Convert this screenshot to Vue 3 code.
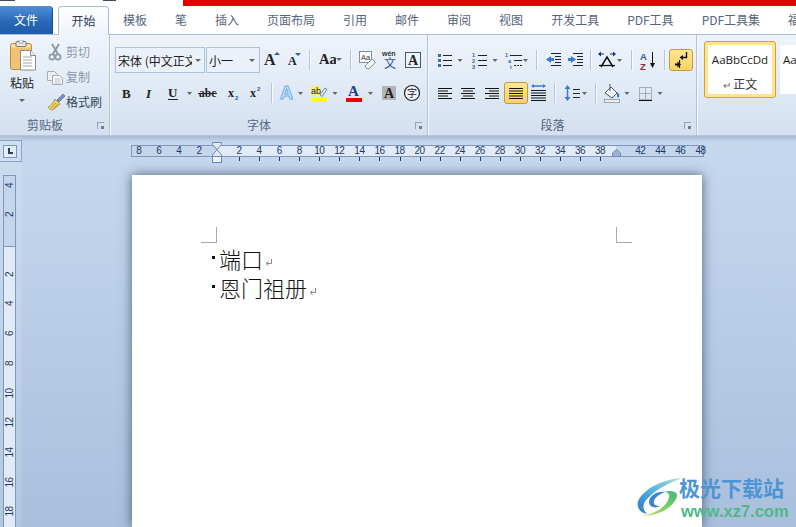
<template>
  <div class="app">
    <!-- title strip -->
    <div class="strip">
      <i class="nub nub-a"></i>
      <i class="nub nub-b"></i>
      <div class="redbar"></div>
    </div>

    <!-- tabs -->
    <div class="tabs">
      <div class="tab-file">文件</div>
      <div class="tab-home">开始</div>
      <div v-for="t in tabs" :key="t" class="tab">{{ t }}</div>
    </div>

    <!-- ribbon -->
    <div class="ribbon">
      <section class="group g-clip">
        <div class="clip-body">
          <div class="paste">
            <svg width="26" height="31" viewBox="0 0 26 31">
              <rect x="0.5" y="3.5" width="21" height="26" rx="2" fill="#f2c273" stroke="#b98a45" />
              <rect x="1.5" y="4.5" width="19" height="3" fill="#fbe0a8" />
              <rect x="6" y="1.5" width="10" height="5" rx="1" fill="#e9e9e9" stroke="#777" />
              <rect x="9" y="0" width="4" height="3" fill="#fff" stroke="#777" stroke-width=".6" />
              <path d="M10.5 10.5h10l5 5v14.5h-15z" fill="#fff" stroke="#8b8b8b" />
              <path d="M20.5 10.5v5h5" fill="#eee" stroke="#8b8b8b" />
              <path d="M13 17h9M13 20h9M13 23h9M13 26h9" stroke="#a9a9a9" />
            </svg>
            <span class="paste-label">粘贴</span>
            <i class="tri"></i>
          </div>
          <div class="clip-list">
            <div class="clip-row off">
              <svg width="20" height="20" viewBox="0 0 20 20">
                <path d="M6 2l6 10M13 2L7 12" stroke="#8e99a8" stroke-width="2" fill="none" />
                <circle cx="6" cy="15" r="2.6" fill="none" stroke="#8e99a8" stroke-width="1.6" />
                <circle cx="12" cy="15" r="2.6" fill="none" stroke="#8e99a8" stroke-width="1.6" />
              </svg>
              <span>剪切</span>
            </div>
            <div class="clip-row off">
              <svg width="20" height="20" viewBox="0 0 20 20">
                <path d="M1.5 4.5h7l3 3v6h-10z" fill="#eef0f3" stroke="#a4acb8" />
                <path d="M6.5 8.5h7l3 3v6h-10z" fill="#f7f8fa" stroke="#a4acb8" />
                <path d="M8.5 12h6M8.5 14h6M8.5 16h6" stroke="#b8bec8" />
              </svg>
              <span>复制</span>
            </div>
            <div class="clip-row">
              <svg width="20" height="20" viewBox="0 0 20 20">
                <path d="M11 8l6-6 2 2-6 6z" fill="#7c93bb" stroke="#4b628c" stroke-width=".7" />
                <path d="M2 15c3-1 5-4 7-8l5 5c-3 3-6 5-8 6-2-.5-3-1.500-4-3z" fill="#f0d05c" stroke="#9a7c2a" stroke-width=".7" />
                <path d="M5 16l5-5M8 16l4-4" stroke="#a38428" stroke-width=".7" />
              </svg>
              <span>格式刷</span>
            </div>
          </div>
        </div>
        <div class="glabel">剪贴板<i class="launcher"></i></div>
      </section>

      <section class="group g-font">
        <div class="rows">
          <div class="row1">
            <div class="combo combo-font">
              <span class="combo-text">宋体 (中文正文)</span>
              <i class="tri"></i>
            </div>
            <div class="combo combo-size">
              <span class="combo-text">小一</span>
              <i class="tri"></i>
            </div>
            <svg width="23" height="24" viewBox="0 0 23 24">
              <text x="4" y="17" class="ser" font-size="16">A</text>
              <path d="M14 7h6l-3-3z" fill="#2d5ea8" />
            </svg>
            <svg width="21" height="24" viewBox="0 0 21 24">
              <text x="5" y="17" class="ser" font-size="12">A</text>
              <path d="M12 5h6l-3 3z" fill="#2d5ea8" />
            </svg>
            <i class="sep"></i>
            <svg width="21" height="24" viewBox="0 0 21 24">
              <text x="4" y="16" class="ser" font-size="14.500">Aa</text>
            </svg>
            <svg width="9" height="24" viewBox="0 0 9 24"><path d="M0 10h6l-3 3z" fill="#666" /></svg>
            <i class="sep"></i>
            <svg width="22" height="24" viewBox="0 0 22 24">
              <rect x="3.500" y="3.500" width="12" height="11" fill="#fff" stroke="#7d8ea8" />
              <text x="5" y="11.500" class="san" font-size="7.500" fill="#333">Aa</text>
              <path d="M9 18l7-7 3.500 3-6 6.500h-3z" fill="#f6f8fb" stroke="#7d8ea8" />
            </svg>
            <svg width="23" height="24" viewBox="0 0 23 24">
              <text x="4" y="7.500" class="san wen" font-size="7" fill="#333">wén</text>
              <text x="6" y="20" class="cjk" font-size="12" fill="#2a52b8">文</text>
            </svg>
            <svg width="23" height="24" viewBox="0 0 23 24">
              <rect x="4.500" y="4.500" width="15" height="15" fill="#eef3fa" stroke="#3d5a7e" />
              <text x="7" y="17" class="ser" font-size="14">A</text>
            </svg>
          </div>
          <div class="row2">
            <svg width="23" height="24" viewBox="0 0 23 24"><text x="7" y="17" class="ser" font-size="13">B</text></svg>
            <svg width="23" height="24" viewBox="0 0 23 24"><text x="8" y="17" class="ser ita" font-size="13">I</text></svg>
            <svg width="23" height="24" viewBox="0 0 23 24">
              <text x="7" y="16" class="ser" font-size="13">U</text>
              <path d="M7 18.500h10" stroke="#222" />
            </svg>
            <svg width="11" height="24" viewBox="0 0 11 24"><path d="M3 11h5l-2.500 3z" fill="#666" /></svg>
            <svg width="26" height="24" viewBox="0 0 26 24">
              <text x="4" y="16" class="ser" font-size="11.500">abc</text>
              <path d="M3 12.500h19" stroke="#222" />
            </svg>
            <svg width="23" height="24" viewBox="0 0 23 24">
              <text x="7" y="16" class="ser" font-size="12">x</text>
              <text x="14" y="19" class="san bluef" font-size="6">2</text>
            </svg>
            <svg width="22" height="24" viewBox="0 0 22 24">
              <text x="6" y="16" class="ser" font-size="12">x</text>
              <text x="13" y="10" class="san bluef" font-size="6">2</text>
            </svg>
            <i class="sep"></i>
            <svg width="19" height="24" viewBox="0 0 19 24">
              <text x="3" y="18" class="glow" font-size="18">A</text>
            </svg>
            <svg width="9" height="24" viewBox="0 0 9 24"><path d="M2 11h5l-2.500 3z" fill="#666" /></svg>
            <svg width="25" height="24" viewBox="0 0 25 24">
              <rect x="6" y="5" width="9" height="9" fill="#f6ee7a" />
              <text x="6" y="13" class="san" font-size="9" fill="#222">ab</text>
              <path d="M15 14l5-7 2 1.500-5 7z" fill="#e8eef7" stroke="#4c6b96" stroke-width=".8" />
              <rect x="6" y="17" width="16" height="4" fill="#ffff00" />
            </svg>
            <svg width="10" height="24" viewBox="0 0 10 24"><path d="M2.500 11h5l-2.500 3z" fill="#666" /></svg>
            <svg width="25" height="24" viewBox="0 0 25 24">
              <text x="8" y="15" class="ser navy" font-size="15">A</text>
              <rect x="6" y="17" width="16" height="4" fill="#ee0000" />
            </svg>
            <svg width="11" height="24" viewBox="0 0 11 24"><path d="M3 11h5l-2.500 3z" fill="#666" /></svg>
            <svg width="25" height="24" viewBox="0 0 25 24">
              <rect x="6" y="5" width="14" height="14" fill="#b4b4b4" />
              <text x="8" y="17" class="ser" font-size="14">A</text>
            </svg>
            <svg width="23" height="24" viewBox="0 0 23 24">
              <circle cx="11" cy="12" r="7.500" fill="#eef3fa" stroke="#222" stroke-width="1.200" />
              <text x="6" y="16" class="cjk" font-size="10" fill="#222">字</text>
            </svg>
          </div>
        </div>
        <div class="glabel">字体<i class="launcher"></i></div>
      </section>

      <section class="group g-para">
        <div class="rows">
          <div class="row1">
            <svg width="20" height="24" viewBox="0 0 20 24">
              <path d="M3 6h3v3H3zM3 11h3v3H3zM3 16h3v3H3z" fill="#3c6cb4" />
              <path d="M8 7.500h9M8 12.500h9M8 17.500h9" stroke="#222" />
            </svg>
            <svg width="10" height="24" viewBox="0 0 10 24"><path d="M2.500 11h5l-2.500 3z" fill="#666" /></svg>
            <svg width="25" height="24" viewBox="0 0 25 24">
              <text x="7" y="9" class="san bluef" font-size="5.500">1</text>
              <text x="7" y="15" class="san bluef" font-size="5.500">2</text>
              <text x="7" y="21" class="san bluef" font-size="5.500">3</text>
              <path d="M13 7.500h9M13 12.500h9M13 17.500h9" stroke="#222" />
            </svg>
            <svg width="10" height="24" viewBox="0 0 10 24"><path d="M2.500 11h5l-2.500 3z" fill="#666" /></svg>
            <svg width="22" height="24" viewBox="0 0 22 24">
              <text x="5" y="9" class="san bluef" font-size="5.500">1</text>
              <text x="8" y="15" class="san bluef" font-size="5.500">a</text>
              <text x="10" y="21" class="san bluef" font-size="5.500">i</text>
              <path d="M10 7.500h12M14 12.500h8" stroke="#222" />
              <path d="M14 17.500h8" stroke="#222" stroke-dasharray="2 1" />
            </svg>
            <svg width="9" height="24" viewBox="0 0 9 24"><path d="M1 11h5l-2.500 3z" fill="#666" /></svg>
            <i class="sep"></i>
            <svg width="22" height="24" viewBox="0 0 22 24">
              <path d="M9 5.500h10M13 8.500h6M13 11.500h6M13 14.500h6M9 17.500h10" stroke="#222" />
              <path d="M4 11.500l5-3.500v2h3v3H9v2z" fill="#3c7cc8" />
            </svg>
            <svg width="21" height="24" viewBox="0 0 21 24">
              <path d="M9 5.500h10M13 8.500h6M13 11.500h6M13 14.500h6M9 17.500h10" stroke="#222" />
              <path d="M12 11.500L7 8v2H4v3h3v2z" fill="#3c7cc8" />
            </svg>
            <i class="sep"></i>
            <svg width="21" height="24" viewBox="0 0 21 24">
              <path d="M5 19l6-10 6 10" fill="none" stroke="#111" stroke-width="1.500" />
              <path d="M3 17.500h16" stroke="#111" stroke-width="1.200" />
              <path d="M2 6l3-2.500v2h3v1H5v2zM20 6l-3-2.500v2h-3v1h3v2z" fill="#122e7d" />
            </svg>
            <svg width="9" height="24" viewBox="0 0 9 24"><path d="M0 11h5l-2.500 3z" fill="#666" /></svg>
            <i class="sep"></i>
            <svg width="22" height="24" viewBox="0 0 22 24">
              <text x="3" y="12" class="san az-a" font-size="9.500">A</text>
              <text x="3" y="21.500" class="san az-z" font-size="9.500">Z</text>
              <path d="M15.500 4v14" stroke="#111" />
              <path d="M13 15h5l-2.500 5z" fill="#111" />
            </svg>
            <i class="sep"></i>
            <div class="on-btn pil">
              <svg width="22" height="22" viewBox="0 0 22 22">
                <path d="M16.500 3v5.500H12" fill="none" stroke="#111" stroke-width="1.400" />
                <path d="M13 6v5L9.500 8.500z" fill="#111" />
                <path d="M9.500 11v8" stroke="#111" stroke-width="1.200" />
                <path d="M5 14.500h2.500v-2l3.500 3-3.500 3v-2H5z" fill="#111" />
              </svg>
            </div>
          </div>
          <div class="row2">
            <svg width="23" height="24" viewBox="0 0 23 24"><path d="M3 7.500h14M3 10h10M3 12.500h14M3 15h10M3 17.500h14" stroke="#111" /></svg>
            <svg width="23" height="24" viewBox="0 0 23 24"><path d="M3 7.500h14M5 10h10M3 12.500h14M5 15h10M3 17.500h14" stroke="#111" /></svg>
            <svg width="23" height="24" viewBox="0 0 23 24"><path d="M4 7.500h14M8 10h10M4 12.500h14M8 15h10M4 17.500h14" stroke="#111" /></svg>
            <div class="on-btn">
              <svg width="22" height="22" viewBox="0 0 22 22"><path d="M4 6.500h14M4 9h14M4 11.500h14M4 14h14M4 16.500h14" stroke="#111" /></svg>
            </div>
            <svg width="21" height="24" viewBox="0 0 21 24">
              <path d="M4 5h13" stroke="#3c7cc8" stroke-width="1.500" />
              <path d="M3 5l3-2v4zM18 5l-3-2v4z" fill="#3c7cc8" />
              <path d="M3 9.500h15M3 12h15M3 14.500h15M3 17h15M3 19.500h15" stroke="#111" />
            </svg>
            <i class="sep"></i>
            <svg width="30" height="24" viewBox="0 0 30 24">
              <path d="M7.500 7v10" stroke="#3c7cc8" stroke-width="1.500" />
              <path d="M4.500 8l3-4 3 4zM4.500 16l3 4 3-4z" fill="#3c7cc8" />
              <path d="M13 8.500h7M13 12.500h7M13 16.500h7" stroke="#222" />
              <path d="M22 11h5l-2.500 3z" fill="#666" />
            </svg>
            <i class="sep"></i>
            <svg width="21" height="24" viewBox="0 0 21 24">
              <path d="M4 12l6-6 6 6-5 5z" fill="#f4f6f9" stroke="#555" />
              <path d="M9 3v7" stroke="#555" />
              <path d="M16 11c2 2 3 3 2 5-1 1-2 0-2-1z" fill="#3c7cc8" />
              <rect x="3.500" y="18.500" width="15" height="3" fill="#efefef" stroke="#9aa4b2" />
            </svg>
            <svg width="10" height="24" viewBox="0 0 10 24"><path d="M2.500 11h5l-2.500 3z" fill="#666" /></svg>
            <svg width="23" height="24" viewBox="0 0 23 24">
              <rect x="7.500" y="6.500" width="12" height="12" fill="none" stroke="#777" stroke-dasharray="1 1" />
              <path d="M13.500 6.500v12M7.500 12.500h12" stroke="#777" stroke-dasharray="1 1" />
              <path d="M7 19.500h13" stroke="#111" />
            </svg>
            <svg width="10" height="24" viewBox="0 0 10 24"><path d="M2.500 11h5l-2.500 3z" fill="#666" /></svg>
          </div>
        </div>
        <div class="glabel">段落<i class="launcher"></i></div>
      </section>

      <section class="group g-style">
        <div class="style-card active">
          <span class="style-sample">AaBbCcDd</span>
          <span class="style-name"><em>↵</em> 正文</span>
        </div>
        <div class="style-card">
          <span class="style-sample">AaBbCcDd</span>
        </div>
      </section>
    </div>

    <!-- document area -->
    <div class="work">
      <div class="side">
        <div class="corner"><span class="corner-btn"><i class="corner-l"></i></span></div>
        <div class="vruler">
          <div class="vruler-dark"></div>
          <span v-for="n in vMarks" :key="n.k" class="vnum" :style="{ top: n.y + 'px' }">{{ n.t }}</span>
        </div>
      </div>
      <div class="main">
        <div class="hruler">
          <div class="hruler-light"></div>
          <template v-for="n in hMarks" :key="n.k">
            <span class="hnum" :style="{ left: n.x + 'px' }">{{ n.t }}</span>
            <i v-if="n.tick" class="htick" :style="{ left: n.x + 'px' }"></i>
          </template>
          <svg class="marker-l" width="10" height="21" viewBox="0 0 10 21">
            <path d="M.5.500h9v2L5 7.500 9.500 13v1.500h-9V13L5 7.500.5 2.500z" fill="#dfe9f6" stroke="#6f88ad" />
            <rect x=".5" y="14.500" width="9" height="6" fill="#eef3fa" stroke="#6f88ad" />
          </svg>
          <svg class="marker-r" width="9" height="8" viewBox="0 0 9 8">
            <path d="M.5 7.500V4L4.500.5 8.500 4v3.500z" fill="#9db2d2" stroke="#6f88ad" />
          </svg>
        </div>
        <div class="page">
          <i class="crop crop-l"></i>
          <i class="crop crop-r"></i>
          <div class="line">
            <i class="dot"></i><span>端口</span>
            <svg class="ret" width="8" height="8" viewBox="0 0 8 8"><path d="M6.500 0v4.500H2M3.500 2.500L1 4.500l2.500 2" fill="none" stroke="#888" /></svg>
          </div>
          <div class="line">
            <i class="dot"></i><span>恩门祖册</span>
            <svg class="ret" width="8" height="8" viewBox="0 0 8 8"><path d="M6.500 0v4.500H2M3.500 2.500L1 4.500l2.500 2" fill="none" stroke="#888" /></svg>
          </div>
        </div>
      </div>
    </div>

    <!-- site watermark -->
    <div class="wm">
      <svg width="45" height="40" viewBox="0 0 45 40">
        <defs>
          <linearGradient id="wmBlue" x1="1" y1="0" x2="0" y2="1">
            <stop offset="0" stop-color="#b8e0c8" />
            <stop offset=".5" stop-color="#54b4e4" />
            <stop offset="1" stop-color="#2f74c4" />
          </linearGradient>
          <linearGradient id="wmGreen" x1="1" y1="0" x2="0" y2="1">
            <stop offset="0" stop-color="#42b878" />
            <stop offset=".7" stop-color="#9ad860" />
            <stop offset="1" stop-color="#e6e860" />
          </linearGradient>
        </defs>
        <path d="M45 1C28 2 8 10 1 24c-2 7 3 12 9 13-5-5-5-11 2-17C20 12 32 6 45 1z" fill="url(#wmBlue)" />
        <path d="M40 17c1 9-14 22-36 22 14-2 26-9 28-19 1-3-2-5-5-5 6-2 11-1 13 2z" fill="url(#wmGreen)" />
        <path d="M28 15c-8-1-16 4-16 10 0 5 6 7 11 4-5 0-7-2-6-5 1-4 6-7 11-9z" fill="#3a86cc" />
      </svg>
      <div class="wm-text">
        <span class="wm-cn">极光下载站</span>
        <span class="wm-en">www.xz7.com</span>
      </div>
    </div>
  </div>
</template>

<script setup>
const tabs = ['模板', '笔', '插入', '页面布局', '引用', '邮件', '审阅', '视图', '开发工具', 'PDF工具', 'PDF工具集', '福']

// 水平标尺：0 点在 218px，每 2 个单位约 20px
const hMarks = []
for (let v = -8; v <= 48; v += 2) {
  if (v === 0 || v === 40) continue
  hMarks.push({
    k: v,
    t: Math.abs(v),
    x: 87 + v * 10.03,
    tick: v > 0 && v < 40,
  })
}

// 垂直标尺
const vMarks = []
for (let v = -4; v <= 18; v += 2) {
  if (v === 0) continue
  vMarks.push({ k: v, t: Math.abs(v), y: 69 + v * 14.85 })
}
</script>

<style scoped>
.app {
  position: relative;
  display: flex;
  flex-direction: column;
  width: 796px;
  height: 527px;
  overflow: hidden;
  background: #fff;
  font-family: "Noto Sans CJK SC", sans-serif;
  font-size: 12px;
}

/* ---- strip ---- */
.strip {
  position: relative;
  display: flex;
  justify-content: flex-end;
  flex: none;
  height: 6px;
}
.redbar {
  width: 613px;
  background: #e00000;
}
.nub {
  position: absolute;
  top: 0;
  height: 1px;
  background: #3b4a6b;
}
.nub-a { left: 0; width: 15px; }
.nub-b { left: 103px; width: 13px; }

/* ---- tabs ---- */
.tabs {
  display: flex;
  align-items: flex-end;
  flex: none;
  height: 29px;
  border-bottom: 1px solid #a9bdd6;
  box-sizing: border-box;
  white-space: nowrap;
}
.tabs > div { flex: none; }
.tab-file {
  width: 53px;
  height: 28px;
  line-height: 27px;
  text-align: center;
  color: #fff;
  background: linear-gradient(#4f8fd6, #2a68b8 55%, #1f5aa8);
  border-radius: 0 4px 0 0;
  border-right: 1px solid #1b4f96;
  box-sizing: border-box;
}
.tab-home {
  width: 51px;
  height: 29px;
  margin: 0 0 -1px 5px;
  line-height: 27px;
  text-align: center;
  color: #2c3c54;
  background: linear-gradient(#fff, #eef3fa);
  border: 1px solid #a9bdd6;
  border-bottom: 0;
  border-radius: 4px 4px 0 0;
  box-sizing: border-box;
}
.tab {
  height: 28px;
  line-height: 27px;
  padding: 0 14px;
  color: #54657d;
}

/* ---- ribbon ---- */
.ribbon {
  display: flex;
  flex: none;
  height: 101px;
  background: linear-gradient(#eff4fb, #d3e0f0);
  box-sizing: border-box;
  border-bottom: 1px solid #b5c6da;
  color: #222;
}
.group {
  display: flex;
  flex-direction: column;
  flex: none;
  box-sizing: border-box;
  height: 100px;
  border-right: 1px solid #b3c4d9;
  box-shadow: 1px 0 0 #f4f8fc;
}
.g-clip { width: 110px; }
.g-font { width: 318px; padding-left: 5px; }
.g-para { width: 269px; padding-left: 7px; }
.g-style { flex: 1; flex-direction: row; gap: 4px; padding: 6px 0 0 7px; border-right: 0; box-shadow: none; }

.rows {
  display: flex;
  flex-direction: column;
  gap: 8px;
  padding-top: 12px;
}
.row1, .row2 {
  display: flex;
  align-items: center;
  flex: none;
}
.row1 { height: 26px; }
.row2 { height: 24px; }
.row1 svg, .row2 svg { flex: none; display: block; }

.sep {
  flex: none;
  width: 1px;
  height: 20px;
  margin: 0 5px;
  background: #b6c6da;
  box-shadow: 1px 0 0 #f6f9fd;
}
.glabel {
  position: relative;
  margin-top: auto;
  height: 20px;
  padding-right: 19px;
  line-height: 19px;
  text-align: center;
  color: #55667e;
}
.g-font .glabel { margin-left: -5px; }
.g-para .glabel { margin-left: -7px; }
.launcher {
  position: absolute;
  right: 5px;
  top: 7px;
  width: 6px;
  height: 6px;
  border-left: 1px solid #93a3b8;
  border-top: 1px solid #93a3b8;
}
.launcher::after {
  content: "";
  position: absolute;
  right: 0;
  bottom: 0;
  width: 3px;
  height: 3px;
  background: #6d7f98;
}
.tri {
  display: block;
  width: 0;
  height: 0;
  border-left: 3px solid transparent;
  border-right: 3px solid transparent;
  border-top: 3px solid #666;
}

/* clipboard */
.clip-body {
  display: flex;
}
.paste {
  display: flex;
  flex-direction: column;
  align-items: center;
  flex: none;
  width: 46px;
  box-sizing: border-box;
  padding: 5px 2px 0 0;
}
.paste svg { display: block; margin-left: 2px; }
.paste-label {
  margin-top: 3px;
  line-height: 17px;
}
.paste .tri { margin-top: 8px; }
.clip-list {
  padding-top: 4px;
}
.clip-row {
  display: flex;
  align-items: center;
  height: 25px;
  color: #33445c;
  white-space: nowrap;
}
.clip-row.off { color: #8d98a8; }

/* font combos */
.combo {
  display: flex;
  align-items: center;
  flex: none;
  height: 26px;
  box-sizing: border-box;
  border: 1px solid #afc2da;
  background: #ebf1f9;
  color: #1c1c1c;
  position: relative;
}
.combo-font { width: 90px; margin-right: 1px; padding-left: 2px; }
.combo-size { width: 54px; padding-left: 2px; }
.combo-text {
  display: block;
  overflow: hidden;
  white-space: nowrap;
}
.combo-font .combo-text { width: 74px; }
.combo .tri { position: absolute; right: 4px; top: 11px; }
.combo-font .tri { right: 3px; }

svg text { font-family: "Liberation Sans", sans-serif; }
svg .ser { font-family: "Liberation Serif", serif; font-weight: 700; fill: #222; }
svg .ita { font-style: italic; }
svg .navy { fill: #23408a; }
svg .cjk { font-family: "Noto Sans CJK SC", sans-serif; }
svg .san { font-family: "Liberation Sans", sans-serif; }
svg .bluef { fill: #2d5ea8; font-weight: 700; }
svg .wen { font-weight: 700; }
svg .az-a { fill: #2d5ea8; font-weight: 700; }
svg .az-z { fill: #8a2f2f; font-weight: 700; }
svg .glow {
  font-family: "Liberation Sans", sans-serif;
  font-weight: 700;
  fill: #cfe6fb;
  stroke: #6fb0e8;
  stroke-width: 1;
}

.on-btn {
  display: flex;
  align-items: center;
  justify-content: center;
  flex: none;
  width: 24px;
  height: 22px;
  box-sizing: border-box;
  border: 1px solid #c49a3e;
  border-radius: 3px;
  background: linear-gradient(#ffe68e, #fdd362);
}
.pil { margin-left: -1px; }

/* styles gallery */
.style-card {
  display: flex;
  flex-direction: column;
  align-items: center;
  flex: none;
  width: 72px;
  height: 57px;
  box-sizing: border-box;
  padding: 4px;
  border: 0;
  overflow: hidden;
  color: #1c1c1c;
}
.style-card.active {
  border: 1px solid #c9a64c;
  border-radius: 3px;
  padding: 3px;
  background: #ffe68e;
}
.style-sample {
  display: block;
  width: 100%;
  height: 31px;
  background: #fff;
  text-align: center;
  font-family: "Open Sans", sans-serif;
  font-size: 11.5px;
  line-height: 30px;
  white-space: nowrap;
}
.style-name {
  display: block;
  width: 100%;
  flex: 1;
  background: #fff;
  text-align: center;
  line-height: 16px;
  color: #333;
}
.style-name em { font-style: normal; font-size: 10px; color: #666; }
.style-card:not(.active) {
  padding: 4px 0 4px 0;
  background: none;
}
.style-card:not(.active) .style-sample {
  height: 49px;
  text-align: left;
  padding-left: 3px;
  line-height: 30px;
  box-sizing: border-box;
}

/* ---- work area ---- */
.work {
  display: flex;
  flex: 1;
  min-height: 0;
  background: linear-gradient(#a4b8d0 0, #c6d8ee 6px, #bcd0e9 35%, #a9bfdc 100%);
}
.side {
  flex: none;
  width: 22px;
  padding-top: 4px;
  background: rgba(255, 255, 255, .12);
}
.corner {
  display: flex;
  align-items: center;
  height: 22px;
  box-sizing: border-box;
  border: 1px solid #8aa2c4;
  border-left: 0;
  background: #cfdff2;
  padding-left: 3px;
}
.corner-btn {
  display: flex;
  align-items: center;
  justify-content: center;
  width: 14px;
  height: 13px;
  box-sizing: border-box;
  border: 1px solid #7d95b9;
  background: #e3edf9;
}
.corner-l {
  display: block;
  width: 5px;
  height: 6px;
  box-sizing: border-box;
  border-left: 2px solid #2c3f66;
  border-bottom: 2px solid #2c3f66;
}
.vruler {
  position: relative;
  width: 13px;
  height: 360px;
  margin: 13px 0 0 3px;
  box-sizing: border-box;
  border: 1px solid #7f97bb;
  border-width: 1px 1px 0 1px;
  background: #e1ebf8;
}
.vruler-dark {
  height: 70px;
  background: #c4d6ec;
  border-bottom: 1px solid #7f97bb;
}
.vnum {
  position: absolute;
  left: 0;
  width: 11px;
  height: 11px;
  margin-top: -6px;
  line-height: 11px;
  text-align: center;
  font-family: "Liberation Sans", sans-serif;
  font-size: 10px;
  letter-spacing: -.5px;
  color: #1c3a6b;
  transform: rotate(-90deg);
}

.main {
  flex: 1;
  display: flex;
  flex-direction: column;
  min-width: 0;
}
.hruler {
  position: relative;
  flex: none;
  width: 573px;
  height: 12px;
  margin: 9px 0 0 109px;
  box-sizing: border-box;
  border: 1px solid #7f97bb;
  background: #c4d6ec;
}
.hruler-light {
  position: absolute;
  left: 85px;
  top: 0;
  width: 399px;
  height: 10px;
  background: #e1ebf8;
}
.hnum {
  position: absolute;
  top: -1px;
  width: 20px;
  margin-left: -10px;
  line-height: 12px;
  text-align: center;
  font-family: "Liberation Sans", sans-serif;
  font-size: 10px;
  letter-spacing: -.5px;
  color: #1c3a6b;
}
.htick {
  position: absolute;
  top: 11px;
  width: 1px;
  height: 4px;
  background: #1c3a6b;
}
.marker-l {
  position: absolute;
  left: 80px;
  top: -4px;
}
.marker-r {
  position: absolute;
  left: 480px;
  top: 3px;
}

.page {
  position: relative;
  flex: 1;
  width: 570px;
  margin: 18px 0 0 110px;
  padding: 69px 0 0 80px;
  box-sizing: border-box;
  background: #fff;
  box-shadow: 0 0 11px rgba(40, 60, 90, .75);
}
.crop {
  position: absolute;
  top: 52px;
  width: 16px;
  height: 16px;
  box-sizing: border-box;
  border-bottom: 1px solid #aaa;
}
.crop-l { left: 69px; border-right: 1px solid #aaa; }
.crop-r { left: 484px; border-left: 1px solid #aaa; }
.line {
  display: flex;
  align-items: center;
  height: 29px;
  font-size: 22px;
  font-weight: 300;
  line-height: 29px;
  color: #111;
  white-space: nowrap;
}
.dot {
  flex: none;
  width: 3px;
  height: 3px;
  margin: 0 4px 3px 0;
  background: #111;
}
.ret {
  flex: none;
  margin: 9px 0 0 2px;
}

/* ---- watermark ---- */
.wm {
  position: absolute;
  left: 637px;
  top: 475px;
  display: flex;
}
.wm svg { flex: none; display: block; margin-top: 2px; }
.wm-text {
  display: flex;
  flex-direction: column;
  margin-left: -3px;
  white-space: nowrap;
}
.wm-cn {
  font-size: 21px;
  line-height: 24px;
  font-weight: 700;
  color: #4d94d6;
}
.wm-en {
  margin: 4px 0 0 2px;
  font-family: "Liberation Sans", sans-serif;
  font-size: 16.5px;
  line-height: 16px;
  font-weight: 700;
  color: #4fb88a;
}
</style>

<style>
html, body {
  margin: 0;
  overflow: hidden;
}
</style>
